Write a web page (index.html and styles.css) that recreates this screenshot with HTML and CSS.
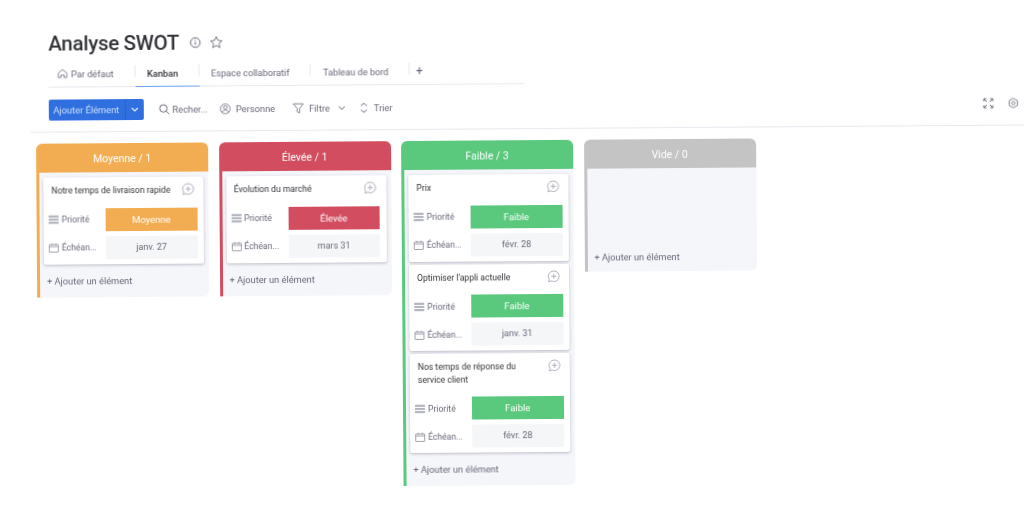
FILE: index.html
```html
<!DOCTYPE html>
<html lang="fr">
<head>
<meta charset="utf-8">
<title>Analyse SWOT</title>
<link rel="stylesheet" href="styles.css">
</head>
<body>
<svg class="defs" width="0" height="0" aria-hidden="true">
  <symbol id="i-list" viewBox="0 0 10 10"><path d="M.8 1.800h8.400M.8 5h8.400M.8 8.200h8.400" fill="none" stroke="currentColor" stroke-width="2.200" stroke-linecap="round"/></symbol>
  <symbol id="i-cal" viewBox="0 0 10 10"><path d="M1 2h8a.5.5 0 0 1 .5.5v6.500a.5.5 0 0 1-.5.5H1a.5.5 0 0 1-.5-.5V2.500A.5.5 0 0 1 1 2zM.5 4h9M3 .8v2M7 .8v2" fill="none" stroke="currentColor" stroke-width=".8"/></symbol>
  <symbol id="i-add" viewBox="0 0 13 13"><path d="M6.800 1a5.300 5.300 0 1 1-2.600 9.900L1.600 11.900l.7-2.500A5.300 5.300 0 0 1 6.800 1zM6.800 3.700v5.200M4.200 6.300h5.200" fill="none" stroke="currentColor" stroke-width=".9"/></symbol>
</svg>
<div class="page">
  <header class="title-row">
    <h1 class="title">Analyse SWOT</h1>
    <svg class="title-icon" viewBox="0 0 12 12"><circle cx="6" cy="6" r="4.800" fill="none" stroke="currentColor"/><path d="M6 5.300v3M6 3.200v1" stroke="currentColor" fill="none"/></svg>
    <svg class="title-icon star" viewBox="0 0 14 14"><path d="M7 1.300l1.700 3.700 4 .5-3 2.700.9 4L7 10.200l-3.600 2 .9-4-3-2.700 4-.5z" fill="none" stroke="currentColor" stroke-width=".9" stroke-linejoin="round"/></svg>
  </header>
  <nav class="tabs">
    <div class="tab tab-default">
      <svg class="tab-icon" viewBox="0 0 10 10"><path d="M.8 4.500L5 1l4.200 3.500V9H6.500V6.500h-3V9H.8z" fill="none" stroke="currentColor" stroke-width=".8" stroke-linejoin="round"/></svg>
      <span>Par défaut</span>
    </div>
    <div class="tab tab-kanban">Kanban</div>
    <div class="tab tab-collab">Espace collaboratif</div>
    <div class="tab tab-board">Tableau de bord</div>
    <div class="tab tab-plus">+</div>
  </nav>
  <div class="toolbar">
    <div class="add-btn"><span class="add-label">Ajouter Élément</span><span class="add-arrow"><svg viewBox="0 0 8 5" class="chev"><path d="M1 1l3 3 3-3" fill="none" stroke="currentColor" stroke-width="1.100"/></svg></span></div>
    <div class="tool tool-search"><svg class="tool-icon" viewBox="0 0 11 11"><circle cx="4.600" cy="4.600" r="3.700" fill="none" stroke="currentColor"/><path d="M7.300 7.300l3 3" stroke="currentColor" fill="none"/></svg><span>Recher...</span></div>
    <div class="tool tool-person"><svg class="tool-icon" viewBox="0 0 11 11"><circle cx="5.500" cy="5.500" r="4.900" fill="none" stroke="currentColor" stroke-width=".8"/><circle cx="5.500" cy="4.300" r="1.800" fill="none" stroke="currentColor" stroke-width=".8"/><path d="M2.300 9c.5-1.700 1.700-2.300 3.200-2.300S8.200 7.300 8.700 9" fill="none" stroke="currentColor" stroke-width=".8"/></svg><span>Personne</span></div>
    <div class="tool tool-filter"><svg class="tool-icon" viewBox="0 0 11 11"><path d="M.5 1h10L6.700 5.600v4.600l-2.400-1.300V5.600z" fill="none" stroke="currentColor" stroke-width=".8" stroke-linejoin="round"/></svg><span>Filtre</span><svg viewBox="0 0 8 5" class="chev chev-filter"><path d="M1 1l3 3 3-3" fill="none" stroke="currentColor" stroke-width="1"/></svg></div>
    <div class="tool tool-sort"><svg class="tool-icon sort-icon" viewBox="0 0 8 11"><path d="M1 3.500L4 1l3 2.500M1 7.500L4 10l3-2.500" fill="none" stroke="currentColor" stroke-width=".9"/></svg><span>Trier</span></div>
    <div class="tool-right">
      <svg class="tool-icon" viewBox="0 0 11 11"><path d="M1 1l3 3M1 1h2.500M1 1v2.500M10 1L7 4M10 1H7.500M10 1v2.500M1 10l3-3M1 10h2.500M1 10V7.500M10 10L7 7M10 10H7.500M10 10V7.500" fill="none" stroke="currentColor"/></svg>
      <svg class="tool-icon" viewBox="0 0 12 12"><path d="M6 .8l4.500 2.600v5.200L6 11.200 1.500 8.600V3.400z" fill="none" stroke="currentColor" stroke-width=".9" stroke-linejoin="round"/><circle cx="6" cy="6" r="1.800" fill="none" stroke="currentColor" stroke-width=".9"/></svg>
    </div>
  </div>
  <main class="board">
    <section class="col col-orange">
      <h2 class="col-head">Moyenne / 1</h2>
      <div class="col-body">
        <article class="card">
          <div class="card-top"><p class="card-title">Notre temps de livraison rapide</p><svg class="card-add"><use href="#i-add"/></svg></div>
          <div class="row"><svg class="row-icon"><use href="#i-list"/></svg><span class="row-label">Priorité</span><span class="pill pill-orange">Moyenne</span></div>
          <div class="row"><svg class="row-icon"><use href="#i-cal"/></svg><span class="row-label">Échéan...</span><span class="pill pill-date">janv. 27</span></div>
        </article>
        <div class="add-item">+ Ajouter un élément</div>
      </div>
    </section>
    <section class="col col-red">
      <h2 class="col-head">Élevée / 1</h2>
      <div class="col-body">
        <article class="card">
          <div class="card-top"><p class="card-title">Évolution du marché</p><svg class="card-add"><use href="#i-add"/></svg></div>
          <div class="row"><svg class="row-icon"><use href="#i-list"/></svg><span class="row-label">Priorité</span><span class="pill pill-red">Élevée</span></div>
          <div class="row"><svg class="row-icon"><use href="#i-cal"/></svg><span class="row-label">Échéan...</span><span class="pill pill-date">mars 31</span></div>
        </article>
        <div class="add-item">+ Ajouter un élément</div>
      </div>
    </section>
    <section class="col col-green">
      <h2 class="col-head">Faible / 3</h2>
      <div class="col-body">
        <article class="card">
          <div class="card-top"><p class="card-title">Prix</p><svg class="card-add"><use href="#i-add"/></svg></div>
          <div class="row"><svg class="row-icon"><use href="#i-list"/></svg><span class="row-label">Priorité</span><span class="pill pill-green">Faible</span></div>
          <div class="row"><svg class="row-icon"><use href="#i-cal"/></svg><span class="row-label">Échéan...</span><span class="pill pill-date">févr. 28</span></div>
        </article>
        <article class="card">
          <div class="card-top"><p class="card-title">Optimiser l'appli actuelle</p><svg class="card-add"><use href="#i-add"/></svg></div>
          <div class="row"><svg class="row-icon"><use href="#i-list"/></svg><span class="row-label">Priorité</span><span class="pill pill-green">Faible</span></div>
          <div class="row"><svg class="row-icon"><use href="#i-cal"/></svg><span class="row-label">Échéan...</span><span class="pill pill-date">janv. 31</span></div>
        </article>
        <article class="card">
          <div class="card-top"><p class="card-title">Nos temps de réponse du service client</p><svg class="card-add"><use href="#i-add"/></svg></div>
          <div class="row"><svg class="row-icon"><use href="#i-list"/></svg><span class="row-label">Priorité</span><span class="pill pill-green">Faible</span></div>
          <div class="row"><svg class="row-icon"><use href="#i-cal"/></svg><span class="row-label">Échéan...</span><span class="pill pill-date">févr. 28</span></div>
        </article>
        <div class="add-item">+ Ajouter un élément</div>
      </div>
    </section>
    <section class="col col-gray">
      <h2 class="col-head">Vide / 0</h2>
      <div class="col-body col-body-empty">
        <div class="add-item">+ Ajouter un élément</div>
      </div>
    </section>
  </main>
</div>
</body>
</html>
```
FILE: styles.css
```css
html, body {
  margin: 0;
  height: 100%;
  overflow: hidden;
  background: #fff;
}
.defs { display: block; }
.page {
  box-sizing: border-box;
  width: 1040px;
  height: 505px;
  padding-top: 29px;
  font-family: Roboto, "Liberation Sans", sans-serif;
  color: #676879;
  transform: rotate(-0.42deg);
  transform-origin: 0 0;
  filter: blur(0.45px);
}
.title-row {
  display: flex;
  align-items: center;
  height: 30px;
  padding-left: 48px;
}
.title {
  margin: 0;
  font-size: 20.500px;
  font-weight: 500;
  color: #323338;
  letter-spacing: -0.3px;
  white-space: nowrap;
}
.title-icon { width: 12px; height: 12px; margin-left: 10px; color: #676879; }
.star { margin-left: 8px; width: 14px; height: 14px; }
.tabs {
  display: flex;
  align-items: center;
  box-sizing: border-box;
  width: 476px;
  height: 29px;
  margin: 0 0 0 47.500px;
  padding-top: 2px;
  border-bottom: 1px solid #e6e9ef;
  font-size: 9.200px;
}
.tab {
  position: relative;
  display: flex;
  align-items: center;
  box-sizing: border-box;
  height: 27px;
  white-space: nowrap;
  color: #676879;
}
.tab::after {
  content: "";
  position: absolute;
  right: 0;
  top: 5px;
  height: 12px;
  border-right: 1px solid #e6e9ef;
}
.tab-default { width: 87px; padding-left: 9px; gap: 4px; }
.tab-kanban { width: 64px; padding-left: 12px; color: #323338; font-weight: 500; border-bottom: 1px solid #6f9fee; margin-bottom: -1px; }
.tab-collab { width: 111px; padding-left: 12px; }
.tab-board { width: 99px; padding-left: 13px; }
.tab-plus { padding-left: 7px; font-size: 12px; }
.tab-plus::after { display: none; }
.tab-icon { width: 10px; height: 10px; }
.toolbar {
  display: flex;
  align-items: center;
  box-sizing: border-box;
  height: 45px;
  margin-left: 30px;
  padding: 0 0 0 17.500px;
  font-size: 9.300px;
  border-bottom: 1px solid #e8e8f0;
}
.add-btn {
  display: flex;
  width: 95px;
  height: 21px;
  border-radius: 2px;
  background: #2f6fe0;
  color: #cfe0fa;
}
.add-label { display: flex; align-items: center; width: 77px; padding-left: 5px; box-sizing: border-box; border-right: 1px solid #2a62c6; white-space: nowrap; }
.add-arrow { flex: 1; display: flex; align-items: center; justify-content: center; color: #e8f0fd; }
.chev { width: 8px; height: 5px; }
.tool { display: flex; align-items: center; gap: 5px; white-space: nowrap; }
.tool-icon { width: 11px; height: 11px; flex: none; color: #676879; }
.tool-search { margin-left: 15px; gap: 3px; }
.tool-person { margin-left: 12px; }
.tool-filter { margin-left: 18px; }
.chev-filter { margin-left: 3px; color: #676879; }
.tool-sort { margin-left: 14px; gap: 6px; }
.sort-icon { width: 8px; }
.tool-right { display: flex; gap: 14px; margin-left: auto; margin-right: 22px; }
.board {
  display: flex;
  align-items: flex-start;
  gap: 10.500px;
  padding: 11px 0 0 35px;
}
.col { width: 172px; flex: none; }
.col-head {
  margin: 0;
  height: 29px;
  line-height: 32px;
  border-radius: 6px 6px 0 0;
  text-align: center;
  font-size: 10.500px;
  font-weight: 400;
  color: #fff;
}
.col-body {
  box-sizing: border-box;
  padding: 5px 4px 0 4px;
  border-left: 3px solid;
  border-radius: 0 0 6px 0;
  background: #f5f6fa;
}
.col-body-empty { height: 103px; padding-top: 75px; }
.col-orange .col-head { background: #f2ad52; }
.col-orange .col-body { border-color: #f2ad52; }
.col-red .col-head { background: #d14d5f; }
.col-red .col-body { border-color: #d14d5f; }
.col-green .col-head { background: #5ac87d; }
.col-green .col-body { border-color: #5ac87d; }
.col-gray .col-head { background: #c4c4c4; }
.col-gray .col-body { border-color: #c4c4c4; }
.card {
  box-sizing: border-box;
  width: 160px;
  margin-bottom: 3px;
  padding: 0 6.500px 5px 5px;
  background: #fff;
  border-radius: 2px;
  box-shadow: 0 1px 3px rgba(60, 60, 80, 0.32);
}
.card-top {
  display: flex;
  justify-content: space-between;
  padding: 7px 0 11px 3px;
  box-sizing: border-box;
  color: #323338;
}
.card-title {
  flex: 0 0 120px;
  margin: 0;
  font-size: 8.600px;
  line-height: 12.500px;
  white-space: normal;
}
.card-add { width: 13px; height: 13px; flex: none; margin: -1px 3px 0 0; color: #a6a8b5; }
.row {
  display: flex;
  align-items: center;
  height: 23px;
  margin-bottom: 5px;
  font-size: 8.600px;
}
.row:last-child { margin-bottom: 0; }
.row-icon { width: 10px; height: 10px; flex: none; color: #b4b6c0; }
.row:last-child .row-icon { color: #8a8c99; }
.row-label { width: 44px; flex: none; margin-left: 3px; white-space: nowrap; }
.pill {
  flex: 1;
  height: 23px;
  line-height: 23px;
  text-align: center;
  font-size: 9.500px;
  color: #fff;
}
.pill-orange { background: #f2ad52; }
.pill-red { background: #d14d5f; }
.pill-green { background: #5ac87d; }
.pill-date { background: #f5f6f8; color: #676879; font-size: 9px; }
.add-item {
  height: 30px;
  padding-left: 3px;
  line-height: 28px;
  font-size: 9.250px;
  color: #676879;
  white-space: nowrap;
}
```
